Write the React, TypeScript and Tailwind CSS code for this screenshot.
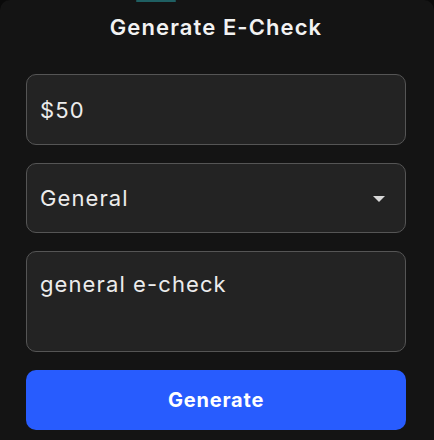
export default function App() {
  return (
    <div className="min-h-[440px] bg-[#0a0a0a] font-['Inter',sans-serif]">
      <div className="min-h-[440px] rounded-t-[10px] bg-[#141414] pl-[26px] pr-[28px] pb-4">
        {/* top accent */}
        <div className="ml-[110px] h-[2px] w-[40px] rounded-full bg-[#1f5f62]" />

        <h1 className="mt-[12px] text-center text-[22px] font-semibold leading-[26px] tracking-[0.05em] text-[#f2f2f2]">
          Generate E-Check
        </h1>

        <form className="mt-[34px] flex flex-col gap-[18px]">
          <input
            defaultValue="$50"
            className="h-[71px] w-full rounded-[10px] border border-[#555] bg-[#232323] px-[13px] text-[22px] tracking-[0.05em] text-[#ececec] outline-none"
          />

          <div className="flex h-[70px] w-full items-center justify-between rounded-[10px] border border-[#555] bg-[#232323] pl-[13px] pr-[20px]">
            <span className="text-[22px] tracking-[0.05em] text-[#ececec]">General</span>
            <svg width="12" height="7" viewBox="0 0 12 7" className="mt-[2px]">
              <path d="M0 0h12L6 6z" fill="#d8d8d8" />
            </svg>
          </div>

          <textarea
            defaultValue="general e-check"
            className="h-[101px] w-full resize-none rounded-[10px] border border-[#555] bg-[#232323] px-[13px] pt-[17px] text-[22px] leading-[30px] tracking-[0.05em] text-[#ececec] outline-none"
          />

          <button
            type="button"
            className="h-[60px] w-full rounded-[10px] bg-[#285cfe] text-[20px] font-bold tracking-[0.04em] text-white"
          >
            Generate
          </button>
        </form>
      </div>
    </div>
  );
}
